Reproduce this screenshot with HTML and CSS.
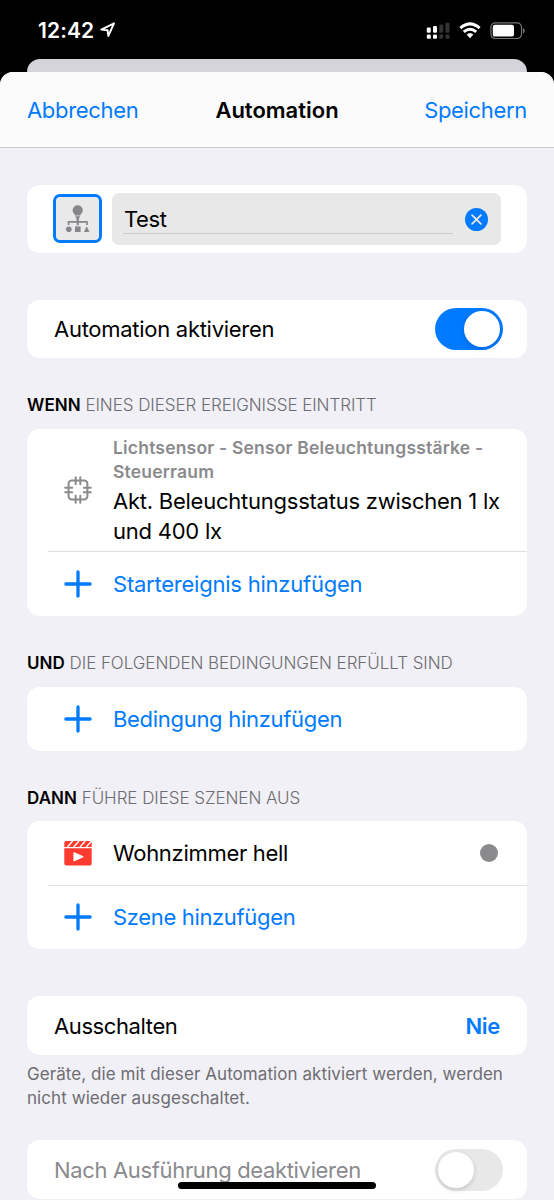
FILE: index.html
```html
<!DOCTYPE html>
<html lang="de">
<head>
<meta charset="utf-8">
<title>Automation</title>
<link rel="stylesheet" href="styles.css">
</head>
<body>
<svg class="defs" width="0" height="0">
  <symbol id="plus" viewBox="0 0 28 28"><path d="M14 1.9v24.200M1.900 14h24.200" stroke="currentColor" stroke-width="3.300" stroke-linecap="round"/></symbol>
</svg>
<div class="screen">
  <div class="status">
    <span class="time">12:42</span>
    <svg class="location" width="16" height="16" viewBox="0 0 16 16"><path d="M1.3 7.6 14 1.3 8.3 14 7.6 8.3z" fill="none" stroke="#fff" stroke-width="1.9" stroke-linejoin="round"/></svg>
    <svg class="signal" width="24" height="18" viewBox="0 0 24 18">
      <g fill="#fff"><rect x=".8" y="5.5" width="4" height="5.2" rx="1.2"/><rect x="7" y="4" width="4" height="6.7" rx="1.2"/><rect x=".8" y="12.5" width="4" height="4.3" rx="1.2"/><rect x="7" y="12.5" width="4" height="4.3" rx="1.2"/></g>
      <g fill="#333"><rect x="13.2" y="2.4" width="4" height="8.3" rx="1.2"/><rect x="19.5" y=".8" width="4" height="9.9" rx="1.2"/><rect x="13.2" y="12.5" width="4" height="4.3" rx="1.2"/><rect x="19.5" y="12.5" width="4" height="4.3" rx="1.2"/></g>
    </svg>
    <svg class="wifi" width="22" height="17" viewBox="0 0 22 17"><g fill="none" stroke="#fff" stroke-width="3"><path d="M1.4 6.1Q11 -2.3 20.6 6.1"/><path d="M4.8 9.9Q11 4.6 17.2 9.9"/></g><path d="M7.6 12.6Q11 9.6 14.4 12.6L11 16.2z" fill="#fff"/></svg>
    <svg class="battery" width="36" height="18" viewBox="0 0 36 18"><rect x=".9" y=".9" width="30.6" height="15.6" rx="4.4" fill="none" stroke="#777" stroke-width="1.2"/><rect x="2.8" y="2.8" width="21.2" height="11.8" rx="2.2" fill="#fff"/><path d="M33 6v5.4q1.7-.7 1.7-2.7T33 6z" fill="#777"/></svg>
  </div>
  <div class="behind"></div>
  <div class="sheet">
    <header class="nav">
      <span class="link cancel">Abbrechen</span>
      <span class="title">Automation</span>
      <span class="link save">Speichern</span>
    </header>
    <main class="content">
      <section class="card name">
        <div class="picker">
          <svg width="26" height="30" viewBox="0 0 26 30" fill="#87878b"><path d="M12.7 1.2a5.1 5.1 0 0 1 5.1 5.1c0 2.5-2 3.5-2.6 5.1h-5c-.6-1.6-2.6-2.6-2.6-5.1a5.1 5.1 0 0 1 5.1-5.1z"/><path d="M10.2 12.2h5l-1 2h-3zM11.5 14h2.4v3h8.9v4h-1.7v-2.3h-7.3v2.5h-2.1v-2.5H4.4V21H2.7v-4h8.8z"/><circle cx="3.8" cy="25.2" r="2.8"/><rect x="10" y="22.4" width="5.6" height="5.6"/><path d="m21.7 22.3 2.8 5.7h-5.6z"/></svg>
        </div>
        <div class="field">
          <span class="value">Test</span>
          <svg width="23" height="23" viewBox="0 0 23 23"><circle cx="11.5" cy="11.5" r="11.5" fill="#007aff"/><path d="m7.1 7.1 8.8 8.8m0-8.8-8.8 8.8" stroke="#e9e9e9" stroke-width="1.8" stroke-linecap="round"/></svg>
        </div>
      </section>

      <section class="card row activate"><span class="t-activate">Automation aktivieren</span><span class="switch on"></span></section>

      <h2 class="head wenn"><b>WENN</b> EINES DIESER EREIGNISSE EINTRITT</h2>
      <section class="card">
        <div class="item event">
          <span class="icon"><svg width="28" height="28" viewBox="0 0 28 28" fill="none" stroke="#8b8b8e" stroke-width="2" stroke-linecap="round"><path d="M11.7 1.2v7M16.3 1.2v7M11.7 19.8v7M16.3 19.8v7M1.2 11.7h7M1.2 16.3h7M19.8 11.7h7M19.8 16.3h7"/><path d="M11.7 4.6H7.8a3.2 3.2 0 0 0-3.2 3.2v3.9M16.3 4.6h3.9a3.2 3.2 0 0 1 3.2 3.2v3.9M11.7 23.4H7.8a3.2 3.2 0 0 1-3.2-3.2v-3.9M16.3 23.4h3.9a3.2 3.2 0 0 0 3.2-3.2v-3.9M11.7 4.6h4.6M11.7 23.4h4.6M4.6 11.7v4.6M23.4 11.7v4.6"/></svg></span>
          <div class="copy">
            <div class="device">Lichtsensor - Sensor Beleuchtungsstärke -<br>Steuerraum</div>
            <div class="detail">Akt. Beleuchtungsstatus zwischen 1 lx<br>und 400 lx</div>
          </div>
        </div>
        <div class="item add"><span class="icon"><svg width="28" height="28"><use href="#plus"/></svg></span><span class="t-start">Startereignis hinzufügen</span></div>
      </section>

      <h2 class="head und"><b>UND</b> DIE FOLGENDEN BEDINGUNGEN ERFÜLLT SIND</h2>
      <section class="card">
        <div class="item add"><span class="icon"><svg width="28" height="28"><use href="#plus"/></svg></span><span class="t-cond">Bedingung hinzufügen</span></div>
      </section>

      <h2 class="head dann"><b>DANN</b> FÜHRE DIESE SZENEN AUS</h2>
      <section class="card">
        <div class="item scene">
          <span class="icon"><svg width="28" height="26" viewBox="0 0 28 26"><path d="M2 1h24a1.700 1.700 0 0 1 1.700 1.700V7H.3V2.700A1.700 1.700 0 0 1 2 1zM.3 8.300h27.400v15.200a2 2 0 0 1-2 2H2.300a2 2 0 0 1-2-2z" fill="#ff3b30"/><path d="M3.400 7 8.700 1M9.700 7 15 1M16 7l5.300-6M22.300 7l5.300-6" stroke="#fff" stroke-width="1.300"/><path d="M10 12.800v8l9-4z" fill="#fff" stroke="#fff" stroke-width="1.200" stroke-linejoin="round"/></svg></span>
          <span class="t-wohn">Wohnzimmer hell</span><span class="dot"></span>
        </div>
        <div class="item add"><span class="icon"><svg width="28" height="28"><use href="#plus"/></svg></span><span class="t-scene">Szene hinzufügen</span></div>
      </section>

      <section class="card row off"><span class="t-off">Ausschalten</span><span class="never">Nie</span></section>
      <p class="note">Geräte, die mit dieser Automation aktiviert werden, werden<br>nicht wieder ausgeschaltet.</p>
      <section class="card row disabled"><span class="t-nach">Nach Ausführung deaktivieren</span><span class="switch"></span></section>
    </main>
  </div>
  <div class="home"></div>
</div>
</body>
</html>
```
FILE: styles.css
```css
* { box-sizing: border-box; }
body { margin: 0; background: #000; }
.screen { position: relative; width: 554px; height: 1200px; overflow: hidden; background: #000; font-family: Inter, "Liberation Sans", sans-serif; font-size: 22px; color: #000; white-space: nowrap; }
.screen svg { display: block; }
.defs { position: absolute; }
.status { height: 59px; padding: 2px 28px 0 38px; display: flex; align-items: center; color: #fff; }
.time { font-size: 21px; letter-spacing: .1px; font-weight: 600; width: 62px; }
.location { margin-bottom: 1px; }
.signal { margin-left: auto; margin-right: 9px; }
.wifi { margin-right: 9px; }
.behind { height: 13px; margin: 0 27px; border-radius: 13px 13px 0 0; background: #d5d4da; }
.sheet { height: 1128px; background: #f1f0f6; border-radius: 13px 13px 0 0; overflow: hidden; }
.nav { height: 76px; padding: 0 27px; display: grid; grid-template-columns: 1fr auto 1fr; align-items: center; background: #fbfbfc; border-bottom: 1px solid #cacacf; }
.link, .add, .never { color: #007aff; }
.link { letter-spacing: -.33px; }
.save { text-align: right; }
.title { font-weight: 600; }
.content { padding: 37px 27px 0; }
.card { background: #fff; border-radius: 13px; overflow: hidden; }
.row { height: 59px; padding: 0 24px 0 27px; display: flex; align-items: center; justify-content: space-between; }
.name { height: 68px; padding: 8px 26px; display: flex; gap: 10px; }
.picker { width: 49px; height: 49px; margin-top: 1px; border: 3px solid #007aff; border-radius: 7px; background: #e9e9e9; display: flex; align-items: center; justify-content: center; }
.picker svg { flex: none; }
.field { flex: 1; height: 52px; padding: 0 13px 0 11px; border-radius: 7px; background: #e8e8e8; display: flex; align-items: center; justify-content: space-between; }
.value { width: 330px; height: 29px; padding-left: 1px; line-height: 29px; letter-spacing: -.4px; border-bottom: 1px solid #cbcbcd; }
.activate { height: 58px; margin-top: 47px; }
.t-activate { letter-spacing: -.28px; }
.t-start { letter-spacing: -.23px; }
.t-cond, .t-wohn { letter-spacing: -.3px; }
.t-scene, .t-nach { letter-spacing: -.34px; }
.t-off { letter-spacing: -.4px; }
.switch { width: 68px; height: 42px; padding: 3px; border-radius: 21px; background: #e8e8e8; }
.switch::before { content: ""; display: block; width: 36px; height: 36px; border-radius: 50%; background: #fff; box-shadow: 0 2px 5px rgba(0,0,0,.15); }
.on { background: #007aff; }
.on::before { margin-left: auto; }
.head { height: 70.5px; margin: 0; padding-top: 35px; font-size: 17px; line-height: 24px; letter-spacing: -.06px; font-weight: 300; color: #6d6d72; }
.wenn { height: 71px; }
.head b { color: #000; font-weight: 600; letter-spacing: .05px; }
.item { position: relative; height: 64px; display: flex; align-items: center; }
.item:not(:last-child)::after { content: ""; position: absolute; left: 21px; right: 0; bottom: 0; height: 1px; background: #dfdfe2; }
.scene:not(:last-child)::after { bottom: -1px; }
.icon { width: 86px; padding-left: 36.5px; }
.event { height: 123px; }
.event .icon { padding-bottom: 1px; }
.device { font-size: 17.5px; line-height: 24px; letter-spacing: .19px; font-weight: 600; color: #8a8a8d; }
.detail { margin-top: 2px; line-height: 30px; letter-spacing: -.24px; }
.dot { width: 18px; height: 18px; border-radius: 50%; background: #8a8a8d; margin: 0 29px 0 auto; }
.off { margin-top: 47px; }
.never { font-weight: 600; padding-right: 3px; letter-spacing: -.3px; }
.note { margin: 7px 0 30px; font-size: 17px; line-height: 24px; letter-spacing: .07px; color: #6d6d72; }
.disabled { color: #8a8a8d; }
.home { position: absolute; left: 178px; top: 1182px; width: 198px; height: 7px; border-radius: 4px; background: #000; }
```
